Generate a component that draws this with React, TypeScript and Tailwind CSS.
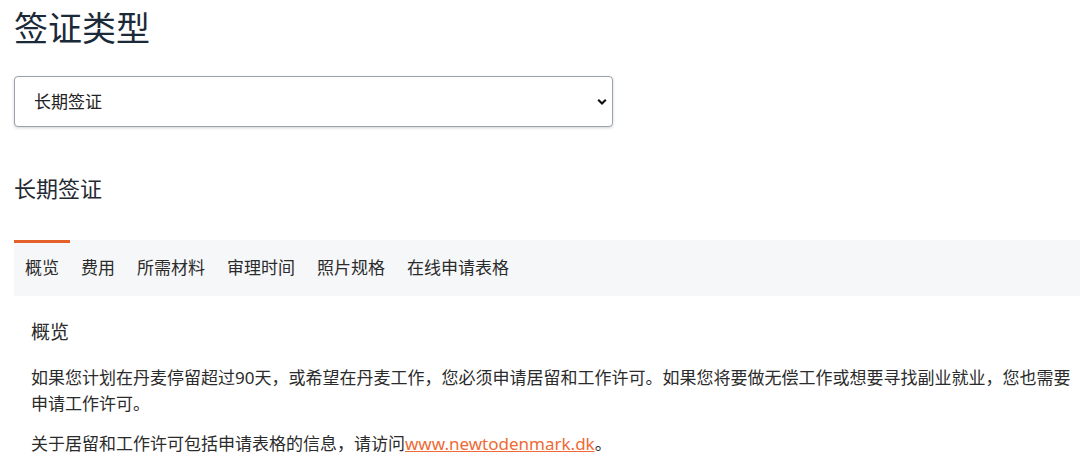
import React, { useState } from 'react';

const tabs = ['概览', '费用', '所需材料', '审理时间', '照片规格', '在线申请表格'];

const font = { fontFamily: '"Noto Sans", "Noto Sans CJK SC", sans-serif' };

export default function App() {
  const [active, setActive] = useState(0);

  return (
    <div className="bg-white min-h-screen pl-[14px] pr-[14px] pt-[8px] text-[#333]" style={font}>
      <h1 className="text-[34px] leading-[41px] text-[#1b2a38]">签证类型</h1>

      <div className="mt-[27px] w-[599px] h-[51px] relative">
        <select
          className="w-full h-full appearance-none rounded-[4px] border border-[#9aa3ad] bg-white pl-[19px] pr-8 text-[17px] text-[#222] shadow-[0_1px_3px_rgba(0,0,0,0.18)] outline-none"
          defaultValue="long"
        >
          <option value="long">长期签证</option>
          <option value="short">短期签证</option>
        </select>
        <svg
          className="absolute right-[6px] top-1/2 -translate-y-1/2 pointer-events-none"
          width="10"
          height="7"
          viewBox="0 0 10 7"
        >
          <path d="M1.2 1.3 5 5 8.8 1.3" fill="none" stroke="#111" strokeWidth="2.2" />
        </svg>
      </div>

      <h2 className="mt-[47px] text-[22px] leading-[29px] text-[#1f2a33]">长期签证</h2>

      <div className="mt-[37px] -mr-[14px] bg-[#f6f7f9] flex h-[56px]">
        {tabs.map((t, i) => (
          <button
            key={t}
            onClick={() => setActive(i)}
            className={
              i === active
                ? 'px-[11px] border-t-[3px] border-[#e4622a] pb-[3px] text-[17px] text-[#2b2b2b]'
                : 'px-[11px] border-t-[3px] border-transparent pb-[3px] text-[17px] text-[#2b2b2b]'
            }
          >
            {t}
          </button>
        ))}
      </div>

      <div className="pl-[17px] -mr-[14px]">
        <h3 className="mt-[23px] text-[19px] leading-[27px] text-[#2b2b2b]">概览</h3>
        <p className="mt-[19px] text-[17px] leading-[25.5px] text-[#2b2b2b]">
          如果您计划在丹麦停留超过90天，或希望在丹麦工作，您必须申请居留和工作许可。如果您将要做无偿工作或想要寻找副业就业，您也需要申请工作许可。
        </p>
        <p className="mt-[15px] text-[17px] leading-[25.5px] text-[#2b2b2b]">
          关于居留和工作许可包括申请表格的信息，请访问
          <a href="#" className="text-[#ef6a35] underline">
            www.newtodenmark.dk
          </a>
          。
        </p>
      </div>
    </div>
  );
}
